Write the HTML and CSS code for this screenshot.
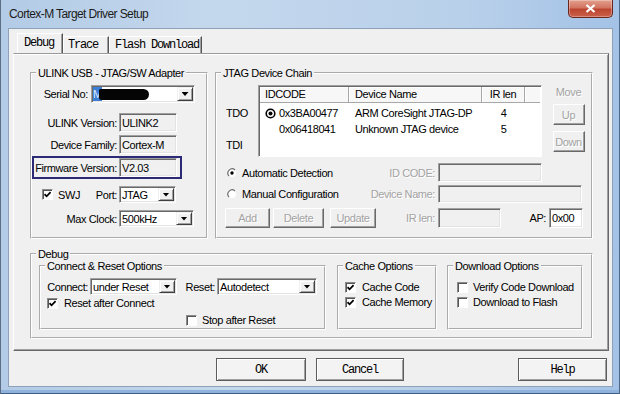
FILE: index.html
```html
<!DOCTYPE html>
<html lang="en">
<head>
    <meta charset="UTF-8" />
    <title>Cortex-M Target Driver Setup</title>
    <link rel="stylesheet" href="styles.css">
</head>
<body>
<div class="window">
    <div class="titlebar">
        <span class="title">Cortex-M Target Driver Setup</span>
        <span class="close"><svg width="11" height="9" viewBox="0 0 11 9"><path d="M1.5 1 L9.5 8 M9.5 1 L1.5 8" stroke="#fff" stroke-width="2.2"/></svg></span>
    </div>

    <div class="client">
        <!-- 选项卡 -->
        <div class="tabs mono">
            <span class="tab active t-debug">Debug</span>
            <span class="tab t-trace">Trace</span>
            <span class="tab t-flash">Flash Download</span>
        </div>

        <div class="panel">
            <div class="top-row">
                <!-- 适配器 -->
                <fieldset class="group adapter">
                    <legend>ULINK USB - JTAG/SW Adapter</legend>
                    <div class="row r-serial">
                        <span class="lbl w-serial">Serial No:</span>
                        <div class="combo c-serial">
                            <span class="sel">M</span><span class="redact"></span><span class="val"></span>
                            <span class="drop"><i></i></span>
                        </div>
                    </div>
                    <div class="row r-ver">
                        <span class="lbl w-info">ULINK Version:</span>
                        <span class="field f-info">ULINK2</span>
                    </div>
                    <div class="row r-fam">
                        <span class="lbl w-info">Device Family:</span>
                        <span class="field f-info">Cortex-M</span>
                    </div>
                    <div class="row r-fw marked">
                        <span class="lbl w-info">Firmware Version:</span>
                        <span class="field f-info">V2.03</span>
                    </div>
                    <div class="row r-swj">
                        <span class="check on"><svg width="7" height="7" viewBox="0 0 7 7"><path d="M0.5 3.2 L2.6 5.3 L6.6 1.2" stroke="#000" stroke-width="1.8" fill="none"/></svg></span>
                        <span class="swj">SWJ</span>
                        <span class="lbl w-port">Port:</span>
                        <div class="combo c-port"><span class="val">JTAG</span><span class="drop"><i></i></span></div>
                    </div>
                    <div class="row r-clock">
                        <span class="lbl w-info">Max Clock:</span>
                        <div class="combo c-clock"><span class="val">500kHz</span><span class="drop"><i></i></span></div>
                    </div>
                </fieldset>

                <!-- JTAG 设备链 -->
                <fieldset class="group chain">
                    <legend>JTAG Device Chain</legend>
                    <div class="chain-top">
                        <div class="tdx"><span>TDO</span><span>TDI</span></div>
                        <div class="devlist">
                            <div class="dl-head">
                                <span>IDCODE</span><span class="c2">Device Name</span><span class="c3">IR len</span><span></span>
                            </div>
                            <div class="dl-body">
                                <div class="dl-row">
                                    <span class="c1"><svg class="pick" width="11" height="11" viewBox="0 0 11 11"><circle cx="5.5" cy="5.5" r="4.3" fill="#fff" stroke="#000" stroke-width="1.6"/><circle cx="5.5" cy="5.5" r="2" fill="#000"/></svg>0x3BA00477</span>
                                    <span class="c2">ARM CoreSight JTAG-DP</span><span class="c3">4</span>
                                </div>
                                <div class="dl-row">
                                    <span class="c1"><i class="pick"></i>0x06418041</span>
                                    <span class="c2">Unknown JTAG device</span><span class="c3">5</span>
                                </div>
                            </div>
                        </div>
                        <div class="move">
                            <span class="dis">Move</span>
                            <button class="btn dis b-up">Up</button>
                            <button class="btn dis b-down">Down</button>
                        </div>
                    </div>
                    <div class="jrow j1">
                        <label class="opt"><svg width="10" height="10" viewBox="0 0 10 10"><circle cx="5" cy="5" r="4" fill="#fff"/><path d="M8 2 A4.25 4.25 0 0 0 2 8" stroke="#6f6f6f" stroke-width="1.2" fill="none"/><circle cx="5" cy="5" r="1.7" fill="#000"/></svg>Automatic Detection</label>
                        <span class="lbl dis w-j">ID CODE:</span>
                        <span class="field f-id"></span>
                    </div>
                    <div class="jrow j2">
                        <label class="opt"><svg width="10" height="10" viewBox="0 0 10 10"><circle cx="5" cy="5" r="4" fill="#fff"/><path d="M8 2 A4.25 4.25 0 0 0 2 8" stroke="#6f6f6f" stroke-width="1.2" fill="none"/></svg>Manual Configuration</label>
                        <span class="lbl dis w-j">Device Name:</span>
                        <span class="field f-name"></span>
                    </div>
                    <div class="jrow j3">
                        <div class="jbtns">
                            <button class="btn dis b-add">Add</button>
                            <button class="btn dis b-del">Delete</button>
                            <button class="btn dis b-upd">Update</button>
                        </div>
                        <span class="lbl dis w-ir">IR len:</span>
                        <span class="field f-ir"></span>
                        <span class="lbl w-ap">AP:</span>
                        <span class="field white f-ap">0x00</span>
                    </div>
                </fieldset>
            </div>

            <!-- Debug 选项 -->
            <fieldset class="group debug">
                <legend>Debug</legend>
                <div class="subgroups">
                    <fieldset class="group cr">
                        <legend>Connect &amp; Reset Options</legend>
                        <div class="row cr1">
                            <span class="lbl w-conn">Connect:</span>
                            <div class="combo c-conn"><span class="val">under Reset</span><span class="drop"><i></i></span></div>
                            <span class="lbl w-reset">Reset:</span>
                            <div class="combo c-reset"><span class="val">Autodetect</span><span class="drop"><i></i></span></div>
                        </div>
                        <label class="chk cr2"><span class="check on"><svg width="7" height="7" viewBox="0 0 7 7"><path d="M0.5 3.2 L2.6 5.3 L6.6 1.2" stroke="#000" stroke-width="1.8" fill="none"/></svg></span>Reset after Connect</label>
                        <label class="chk cr3"><span class="check"></span>Stop after Reset</label>
                    </fieldset>
                    <fieldset class="group cache">
                        <legend>Cache Options</legend>
                        <label class="chk first"><span class="check on"><svg width="7" height="7" viewBox="0 0 7 7"><path d="M0.5 3.2 L2.6 5.3 L6.6 1.2" stroke="#000" stroke-width="1.8" fill="none"/></svg></span>Cache Code</label>
                        <label class="chk"><span class="check on"><svg width="7" height="7" viewBox="0 0 7 7"><path d="M0.5 3.2 L2.6 5.3 L6.6 1.2" stroke="#000" stroke-width="1.8" fill="none"/></svg></span>Cache Memory</label>
                    </fieldset>
                    <fieldset class="group dl">
                        <legend>Download Options</legend>
                        <label class="chk first"><span class="check"></span>Verify Code Download</label>
                        <label class="chk"><span class="check"></span>Download to Flash</label>
                    </fieldset>
                </div>
            </fieldset>
        </div>

        <!-- 底部按钮 -->
        <div class="actions mono">
            <button class="btn big b-ok">OK</button>
            <button class="btn big b-cancel">Cancel</button>
            <button class="btn big b-help">Help</button>
        </div>
    </div>
</div>
</body>
</html>
```

FILE: styles.css
```css
/* -------------------- 基础 -------------------- */
*{box-sizing:border-box}
body{
    margin:0;width:620px;height:394px;overflow:hidden;
    font:11px/14px "Liberation Sans",Arial,sans-serif;letter-spacing:-.4px;color:#000;
}
button{font:inherit;color:inherit;letter-spacing:inherit;padding:0;margin:0}
label{display:flex;align-items:center;white-space:nowrap}
.mono{font:12px/14px "Liberation Mono",monospace;letter-spacing:-1.2px}
.dis{color:#a3a3a3;text-shadow:1px 1px 0 #fff}

/* -------------------- 窗口框架 -------------------- */
.window{
    height:394px;display:flex;flex-direction:column;
    background:linear-gradient(90deg,#b3cbe6,#c4d8ed 35%,#b9d0ea 75%,#a3c2e6);
    box-shadow:inset 1px 0 #5b6e86,inset -1px 0 #4d6788,inset 0 -1px #3f5e86,inset 0 -4px #8fb3dc;
}
.titlebar{flex:none;height:28px;display:flex;justify-content:space-between;align-items:flex-start;padding:0 7px 0 9px}
.title{font:12px/28px "Liberation Sans",Arial,sans-serif;letter-spacing:-.6px;color:#1b1b1b}
.close{
    width:45px;height:18px;display:flex;align-items:center;justify-content:center;
    border:1px solid #6a261c;border-top:none;border-radius:0 0 5px 5px;
    background:linear-gradient(#e3a08e,#d27561 45%,#bd4530 55%,#c9604a);
    box-shadow:inset 0 0 0 1px rgba(255,255,255,.3);
}
.client{flex:1;margin:0 7px 7px 8px;background:#f0f0f0;border:1px solid #8da2b9;padding:4px 3px 0 4px}

/* -------------------- 选项卡 -------------------- */
.tabs{display:flex;align-items:flex-end;height:20px;margin-left:4px}
.tab{height:17px;line-height:16px;border-top:1px solid #fff;border-left:1px solid #fff;border-right:1px solid #555;
    box-shadow:inset -1px 0 #a0a0a0}
.tab.active{height:20px;line-height:19px}
.t-debug{width:46px;padding-left:6px}
.t-trace{width:46px;padding-left:4px}
.t-flash{width:93px;padding-left:5px}
.panel{
    width:596px;height:298px;padding:13px 0 0 16px;
    border:1px solid;border-color:#9a9a9a #696969 #696969 #fff;
    box-shadow:inset 0 1px #fff,inset -1px -1px #a0a0a0;
}

/* -------------------- 分组框 -------------------- */
.group{margin:0;padding:0;min-width:0;border:2px groove #fff}
.group legend{margin-left:4px;padding:0 2px;line-height:12px;white-space:nowrap}
.top-row{display:flex;gap:7px}
.adapter{width:178px;height:172px}
.chain{width:378px;height:172px}
.debug{width:563px;height:91px;margin-top:9px}
.subgroups{display:flex;padding-left:7px}
.cr{width:287px;height:70px}
.cache{width:100px;height:70px;margin-left:11px}
.dl{width:136px;height:70px;margin-left:10px}

/* -------------------- 行与标签 -------------------- */
.row{display:flex;align-items:center}
.lbl{flex:none;display:flex;justify-content:flex-end;white-space:nowrap}
.r-serial{margin-top:6px;height:18px}
.r-ver{margin-top:10px;height:19px}
.r-fam{margin-top:3px;height:19px}
.r-fw{margin-top:4px;height:19px}
.r-swj{margin-top:9px;height:17px;padding-left:10px}
.r-clock{margin-top:7px;height:17px}
.w-serial{width:56px;margin-right:3px}
.w-info{width:85px;margin-right:2px}
.w-port{width:29px;margin-right:2px}
.swj{width:30px;margin-left:5px}
.marked{position:relative;width:150px}
.marked::after{content:"";position:absolute;left:0;right:0;top:-2px;bottom:-2px;border:2px solid #2c2a74}

/* -------------------- 输入框 / 下拉框 -------------------- */
.field,.combo{
    align-self:stretch;border:1px solid;border-color:#a0a0a0 #fff #fff #a0a0a0;
    box-shadow:inset 1px 1px #696969,inset -1px -1px #e3e3e3;
}
.field{display:flex;align-items:center;padding-left:2px;background:#f0f0f0;white-space:nowrap}
.field.white{background:#fff}
.f-info{width:58px}
.combo{display:flex;padding:1px;background:#fff}
.combo .val{flex:1;display:flex;align-items:center;padding-left:1px;white-space:nowrap;overflow:hidden}
.drop{
    flex:none;width:16px;display:flex;align-items:center;justify-content:center;background:#f0f0f0;
    border:1px solid;border-color:#f0f0f0 #404040 #404040 #f0f0f0;
    box-shadow:inset 1px 1px #fff,inset -1px -1px #a0a0a0;
}
.drop i{width:7px;height:4px;background:#000;clip-path:polygon(0 0,100% 0,50% 100%)}
.c-serial{width:104px}
.c-port{width:57px}
.c-clock{width:75px}
.sel{width:9px;background:#3d7fd6;color:#dce9fb;display:flex;align-items:center;overflow:hidden}
.redact{width:50px;height:11px;align-self:center;margin-left:-3px;background:#050505;border-radius:2px 7px 7px 3px}

/* -------------------- 复选框 -------------------- */
.check{
    flex:none;width:11px;height:11px;display:flex;align-items:center;justify-content:center;background:#fff;
    border:1px solid;border-color:#8a8a8a #fff #fff #8a8a8a;box-shadow:inset 1px 1px #555;
}
.chk{height:14px}
.chk .check{margin-right:6px}

/* -------------------- JTAG 设备链 -------------------- */
.chain-top{display:flex;margin-top:6px;height:72px}
.tdx{width:41px;padding:21px 0 0 9px;display:flex;flex-direction:column;gap:18px}
.devlist{
    width:284px;padding:1px;background:#fff;
    border:1px solid;border-color:#a0a0a0 #fff #fff #a0a0a0;box-shadow:inset 1px 1px #696969;
}
.dl-head,.dl-row{display:grid;grid-template-columns:89px 133px 43px 1fr}
.dl-head span{
    line-height:15px;padding-left:5px;background:#f7f7f7;
    border-right:1px solid #a8a8a8;border-bottom:1px solid #a8a8a8;box-shadow:inset 1px 1px #fff;
}
.dl-head span:last-child{border-right:none}
.dl-head .c2{padding-left:6px}
.dl-head .c3{padding-left:0;text-align:center}
.dl-body{padding-top:2px}
.dl-row{line-height:16px;white-space:nowrap}
.dl-row .c1{display:flex;align-items:center;padding-left:5px}
.dl-row .c2{padding-left:6px}
.dl-row .c3{text-align:center}
.pick{flex:none;width:11px;height:11px;margin-right:3px}
.move{margin-left:10px;width:33px;display:flex;flex-direction:column;align-items:center}
.move .btn{width:32px}
.b-up{margin-top:5px;height:21px}
.b-down{margin-top:6px;height:21px}
.jrow{display:flex;align-items:center}
.j1{margin-top:6px;height:19px}
.j2{margin-top:3px;height:18px}
.j3{margin-top:5px;height:20px}
.opt{flex:none;width:152px;padding-left:10px}
.opt svg{flex:none;margin-right:5px}
.w-j{width:66px;margin-right:3px}
.f-id{width:104px}
.f-name{width:144px}
.jbtns{flex:none;width:159px;height:20px;padding-left:8px;display:flex}
.b-add{width:45px}
.b-del{width:51px;margin-left:3px}
.b-upd{width:46px;margin-left:6px}
.w-ir{width:59px;margin-right:3px}
.f-ir{width:63px}
.w-ap{width:45px;margin-right:3px}
.f-ap{width:34px}

/* -------------------- Debug 选项 -------------------- */
.cr1{margin-top:6px;height:17px;padding-left:4px}
.w-conn{width:43px;margin-right:2px}
.c-conn{width:87px}
.w-reset{width:32px;margin:0 2px 0 6px}
.c-reset{width:100px}
.cr2{margin-top:1px;padding-left:6px}
.cr3{margin-top:3px;padding-left:145px}
.cr3 .check{margin-right:5px}
.cache .chk,.dl .chk{margin-top:1px;padding-left:6px}
.cache .first,.dl .first{margin-top:8px}
.dl .chk{padding-left:8px}
.dl .chk .check{margin-right:5px}

/* -------------------- 按钮 -------------------- */
.btn{
    background:#f0f0f0;border:1px solid;border-color:#fff #696969 #696969 #fff;
    box-shadow:inset -1px -1px #a0a0a0;
}
.actions{display:flex;margin-top:7px;height:23px}
.btn.big{border-color:#5c5c5c;box-shadow:inset 1px 1px #fff,inset -1px -1px #a0a0a0;background:#f3f3f3}
.b-ok{width:90px;margin-left:203px}
.b-cancel{width:88px;margin-left:10px}
.b-help{width:89px;margin-left:auto;margin-right:2px}
```
